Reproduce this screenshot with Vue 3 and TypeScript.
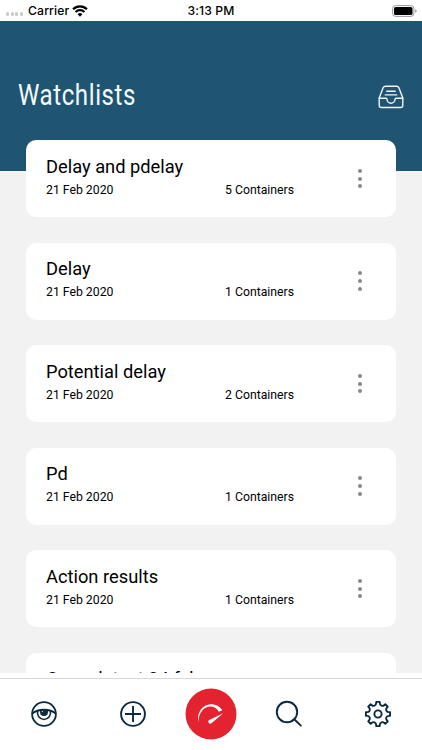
<script setup lang="ts">
interface Watchlist {
  name: string
  date: string
  count: number
}

const watchlists: Watchlist[] = [
  { name: 'Delay and pdelay', date: '21 Feb 2020', count: 5 },
  { name: 'Delay', date: '21 Feb 2020', count: 1 },
  { name: 'Potential delay', date: '21 Feb 2020', count: 2 },
  { name: 'Pd', date: '21 Feb 2020', count: 1 },
  { name: 'Action results', date: '21 Feb 2020', count: 1 },
  { name: 'Consolatest 24 feb', date: '24 Feb 2020', count: 1 },
]

// Outline of an eight-toothed cog with scalloped gaps between the teeth.
function cogPath(): string {
  const point = (radius: number, degrees: number): string => {
    const a = (degrees * Math.PI) / 180
    return `${(14 + radius * Math.cos(a)).toFixed(2)} ${(14 + radius * Math.sin(a)).toFixed(2)}`
  }
  let d = `M${point(12.2, -8)}`
  for (let i = 0; i < 8; i++) {
    const a = i * 45
    d += `L${point(12.2, a + 8)}L${point(10.7, a + 10)}`
    d += `A2.6 2.6 0 0 0 ${point(10.7, a + 35)}L${point(12.2, a + 37)}`
  }
  return d + 'Z'
}

const cog = cogPath()
</script>

<template>
  <div class="screen">
    <div class="status">
      <div class="carrier">
        <span class="signal"><i v-for="n in 4" :key="n"></i></span>
        <span>Carrier</span>
        <svg class="wifi" width="16" height="12" viewBox="0 0 16 12" fill="none" stroke="#000" stroke-width="2.3">
          <path d="M1.1 4.3a9.8 9.8 0 0 1 13.8 0" />
          <path d="M3.6 7a6.2 6.2 0 0 1 8.8 0" />
          <path d="M8 11.7 5.6 9.2a3.5 3.5 0 0 1 4.8 0Z" fill="#000" stroke="none" />
        </svg>
      </div>
      <span class="clock">3:13 PM</span>
      <div class="power">
        <svg width="26" height="12" viewBox="0 0 26 12">
          <rect x=".6" y=".6" width="21.3" height="10.8" rx="3" fill="#fff" stroke="#999" />
          <rect x="2" y="2" width="18.5" height="8" rx="1.6" />
          <path d="M23.2 4.2q1.5.5 1.5 1.8t-1.5 1.8Z" fill="#999" />
        </svg>
      </div>
    </div>

    <header class="header">
      <h1>Watchlists</h1>
      <svg width="26" height="24" viewBox="0 0 26 24" fill="none" stroke="#f0f6fa" stroke-width="1.4" stroke-linecap="round" stroke-linejoin="round">
        <path d="M1.2 13 5 3.1Q5.7 1.3 7.5 1.3h11Q20.3 1.3 21 3.1L24.8 13V20.3q0 2.2-2.2 2.2H3.4q-2.2 0-2.2-2.2Z" />
        <path d="M1.2 13.3H8q.9 0 1 1a4 4 0 0 0 8 0q.1-1 1-1h6.8M8.8 6.2h8.4M7.3 9.9h11.4" />
      </svg>
    </header>

    <main class="list">
      <article v-for="item in watchlists" :key="item.name" class="card">
        <div class="details">
          <h2>{{ item.name }}</h2>
          <div class="meta">
            <span>{{ item.date }}</span>
            <span>{{ item.count }} Containers</span>
          </div>
        </div>
        <button class="more" aria-label="More"><i></i><i></i><i></i></button>
      </article>
    </main>

    <nav class="tabs">
      <button aria-label="Watch">
        <svg width="28" height="28" viewBox="0 0 28 28" fill="none" stroke="#0b2a40" stroke-width="1.8">
          <circle cx="14" cy="14" r="11.9" />
          <path d="M2.3 13.6C8 8.4 20 8.4 25.7 13.6" stroke-width="1.9" />
          <path d="M7.8 11a6.5 6.5 0 1 0 12.4 0" stroke-width="1.6" />
          <path d="M10.3 10.2a4.1 4.1 0 1 0 7.4 0Z" fill="#0b2a40" stroke="none" />
          <circle cx="12.4" cy="11.6" r=".6" fill="#fff" stroke="none" />
        </svg>
      </button>
      <button aria-label="Add">
        <svg width="28" height="28" viewBox="0 0 28 28" fill="none" stroke="#0b2a40" stroke-width="1.9">
          <circle cx="14" cy="14" r="11.9" />
          <path d="M14 6v16M6 14h16" />
        </svg>
      </button>
      <button class="home" aria-label="Dashboard">
        <svg width="52" height="52" viewBox="0 0 52 52">
          <circle cx="26" cy="26" r="25.5" fill="#e32430" />
          <path d="M13.5 34C11.3 25 17.5 16.2 26 16.2c5 0 9 2.2 11.3 6l-3.5 1.6C32 20.3 29.5 18.4 25.5 18.4 18.5 18.4 13.5 25 13.5 34Z" fill="#fff" />
          <path d="M38.3 25.2 26.4 35.2a2 2 0 0 1-2.7-2.9Z" fill="#fff" />
        </svg>
      </button>
      <button aria-label="Search">
        <svg width="28" height="28" viewBox="0 0 28 28" fill="none" stroke="#0b2a40" stroke-width="1.9" stroke-linecap="round">
          <circle cx="12" cy="12" r="10.2" />
          <path d="m19.3 19.3 6.5 6.3" />
        </svg>
      </button>
      <button aria-label="Settings">
        <svg width="28" height="28" viewBox="0 0 28 28" fill="none" stroke="#0b2a40" stroke-width="1.9" stroke-linejoin="round">
          <path :d="cog" />
          <circle cx="14" cy="14" r="3.6" />
        </svg>
      </button>
    </nav>
  </div>
</template>

<style>
body {
  margin: 0;
}
</style>

<style scoped>
.screen {
  display: flex;
  flex-direction: column;
  width: 422px;
  height: 750px;
  overflow: hidden;
  background: #f2f2f2;
  color: #000;
  font-family: Roboto, sans-serif;
}
.status {
  display: grid;
  grid-template-columns: 1fr auto 1fr;
  align-items: center;
  flex: none;
  height: 21px;
  background: #fff;
  font: 450 12.2px/20px Inter, sans-serif;
  letter-spacing: 0.1px;
}
.carrier {
  display: flex;
  align-items: center;
  padding-left: 6px;
}
.signal {
  display: flex;
  gap: 1.3px;
  margin: 7px 5px 0 0;
}
.signal i {
  width: 3.3px;
  height: 3.3px;
  border-radius: 50%;
  background: #c8c8c8;
}
.wifi {
  margin-left: 3px;
}
.power {
  display: flex;
  justify-content: flex-end;
  padding-right: 4px;
}
.header {
  display: flex;
  flex: none;
  align-items: flex-start;
  justify-content: space-between;
  box-sizing: border-box;
  height: 149.5px;
  padding: 57px 18px 0;
  background: #1f5572;
}
h1 {
  margin: 0;
  color: #f5fafd;
  font-size: 29px;
  font-weight: 400;
  line-height: 34px;
  letter-spacing: 0.7px;
  transform: scaleX(0.83);
  transform-origin: left;
}
.header svg {
  margin-top: 7px;
}
.list {
  display: flex;
  flex: 1;
  flex-direction: column;
  gap: 25.5px;
  min-height: 0;
  margin-top: -30.5px;
  padding: 0 26px;
  overflow: hidden;
}
.card {
  display: flex;
  flex: none;
  align-items: center;
  box-sizing: border-box;
  height: 77px;
  padding-left: 20px;
  border-radius: 10px;
  background: #fff;
}
.details {
  flex: 1;
  padding-bottom: 2.2px;
}
h2 {
  margin: 0 0 2px;
  font-size: 18.3px;
  font-weight: 400;
  line-height: 23px;
}
.meta {
  display: grid;
  grid-template-columns: 179px 1fr;
  font-size: 12.25px;
  line-height: 20px;
}
button {
  display: flex;
  align-items: center;
  justify-content: center;
  padding: 0;
  border: 0;
  background: none;
}
.more {
  flex-direction: column;
  gap: 3.6px;
  width: 72px;
  height: 77px;
}
.more i {
  width: 4px;
  height: 4px;
  border-radius: 50%;
  background: #888;
}
.tabs {
  display: grid;
  grid-template-columns: 88.5px 89px 67px 89px 88.5px;
  flex: none;
  box-sizing: border-box;
  height: 77px;
  padding-top: 5px;
  background: linear-gradient(#fff 5px, #d8d8d8 5px, #d8d8d8 6px, #fff 6px);
}
</style>
